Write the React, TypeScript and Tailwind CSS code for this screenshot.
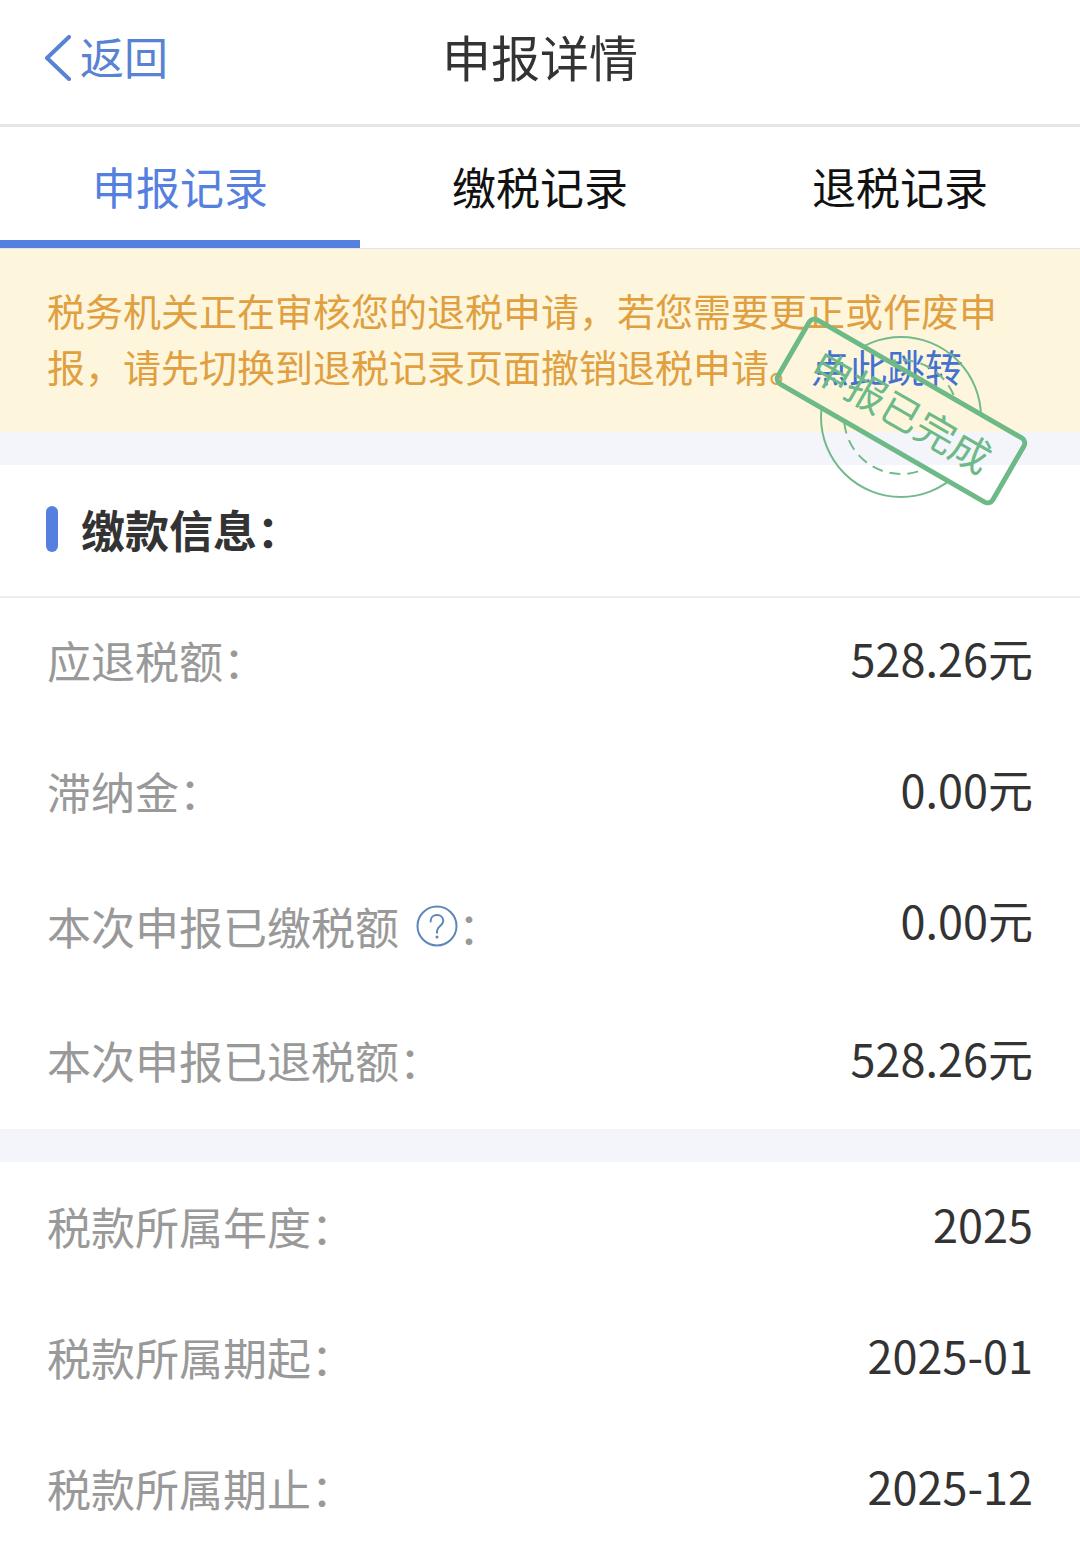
const tabs = ["申报记录", "缴税记录", "退税记录"];

const payment = [
  { name: "应退税额", value: "528.26元" },
  { name: "滞纳金", value: "0.00元" },
  { name: "本次申报已缴税额", value: "0.00元", help: true },
  { name: "本次申报已退税额", value: "528.26元" },
];

const period = [
  { name: "税款所属年度", value: "2025" },
  { name: "税款所属期起", value: "2025-01" },
  { name: "税款所属期止", value: "2025-12" },
];

type RowProps = { name: string; value: string; help?: boolean };

const HelpIcon = () => (
  <svg width="42" height="42" viewBox="0 0 42 42" fill="none" stroke="#5f86b8">
    <circle cx="21" cy="21" r="19.5" strokeWidth="2" />
    <path
      d="M14.6 16.4c0-4 2.8-6.4 6.4-6.4s6.3 2.4 6.3 5.8c0 5-6.3 5.6-6.3 10.4v1.6"
      strokeWidth="2"
      strokeLinecap="round"
    />
    <circle cx="21" cy="32" r="1.5" fill="#5f86b8" stroke="none" />
  </svg>
);

const Stamp = () => (
  <svg
    width="260"
    height="200"
    viewBox="0 0 260 200"
    fill="none"
    className="absolute top-[62px] right-[49px] z-10 pointer-events-none"
  >
    <defs>
      <mask id="outside">
        <rect width="260" height="200" fill="#fff" />
        <rect
          x="5"
          y="62"
          width="250"
          height="76"
          fill="#000"
          transform="rotate(30 130 100)"
        />
      </mask>
    </defs>
    <g mask="url(#outside)" stroke="#74b98c">
      <circle cx="130" cy="106" r="80" strokeWidth="2" />
      <circle cx="130" cy="106" r="57" strokeWidth="2" strokeDasharray="11 7" />
    </g>
    <g transform="rotate(30 130 100)">
      <rect
        x="6"
        y="63"
        width="248"
        height="74"
        rx="6"
        stroke="#6db988"
        strokeWidth="5"
      />
      <text
        x="131"
        y="116"
        textAnchor="middle"
        fill="#6db988"
        className="text-[40px]"
      >
        申报已完成
      </text>
    </g>
  </svg>
);

const Row = ({ name, value, help }: RowProps) => (
  <div className="flex justify-between items-start px-[47px] pt-[30px] pb-[36px]">
    <dt className="flex items-center text-[44px] leading-[65px] text-[#999]">
      {name}
      {help && (
        <button type="button" aria-label="说明" className="ml-[17px] py-[15px]">
          <HelpIcon />
        </button>
      )}
      ：
    </dt>
    <dd className="text-[45px] leading-[60px] text-[#333]">{value}</dd>
  </div>
);

const App = () => {
  return (
    <div
      lang="zh-CN"
      className="min-h-screen bg-white font-['Noto_Sans_CJK_SC',sans-serif]"
    >
      {/* ヘッダー */}
      <header className="grid grid-cols-3 items-center h-[127px] pb-3 px-[44px] border-b-3 border-[#e6e6e6]">
        <a
          href="/"
          className="flex items-center text-[#5882d2] text-[44px] whitespace-nowrap"
        >
          <svg
            width="28"
            height="46"
            viewBox="0 0 28 46"
            fill="none"
            stroke="currentColor"
            strokeWidth="4"
            strokeLinecap="round"
            strokeLinejoin="round"
            className="mt-1 mr-2"
          >
            <path d="M25 2 3 23l22 21" />
          </svg>
          返回
        </a>
        <h1 className="text-center text-[49px] text-[#333] whitespace-nowrap">
          申报详情
        </h1>
      </header>

      {/* タブ */}
      <nav className="grid grid-cols-3 h-[122px] border-b border-[#dfe3ea]">
        {tabs.map((tab, i) => (
          <button
            key={tab}
            type="button"
            className={
              i === 0
                ? "border-b-8 border-[#5580e0] pt-1 text-[44px] text-[#5580e0]"
                : "border-b-8 border-transparent pt-1 text-[44px] text-[#111]"
            }
          >
            {tab}
          </button>
        ))}
      </nav>

      {/* お知らせ */}
      <div className="relative bg-[#fdf6dd] pt-[33px] pb-[38px] px-[47px]">
        <p className="text-[38px] leading-[56px] text-[#e0a040]">
          税务机关正在审核您的退税申请，若您需要更正或作废申报，请先切换到退税记录页面撤销退税申请。
          <a href="/refund" className="ml-1 text-[#4470d0]">
            点此跳转
          </a>
        </p>
        <Stamp />
      </div>

      <section className="border-t-[33px] border-[#f4f5fa]">
        <div className="flex items-center h-[133px] pb-1 px-[46px] border-b-2 border-[#ededed]">
          <span className="w-3 h-[46px] mr-[23px] rounded-full bg-[#5580e0]" />
          <h2 className="text-[44px] font-bold text-[#333]">缴款信息：</h2>
        </div>
        <dl>
          {payment.map((item) => (
            <Row key={item.name} {...item} />
          ))}
        </dl>
      </section>

      <section className="border-t-[33px] border-[#f4f5fa]">
        <dl className="pt-0.5">
          {period.map((item) => (
            <Row key={item.name} {...item} />
          ))}
        </dl>
      </section>
    </div>
  );
};

export default App;
